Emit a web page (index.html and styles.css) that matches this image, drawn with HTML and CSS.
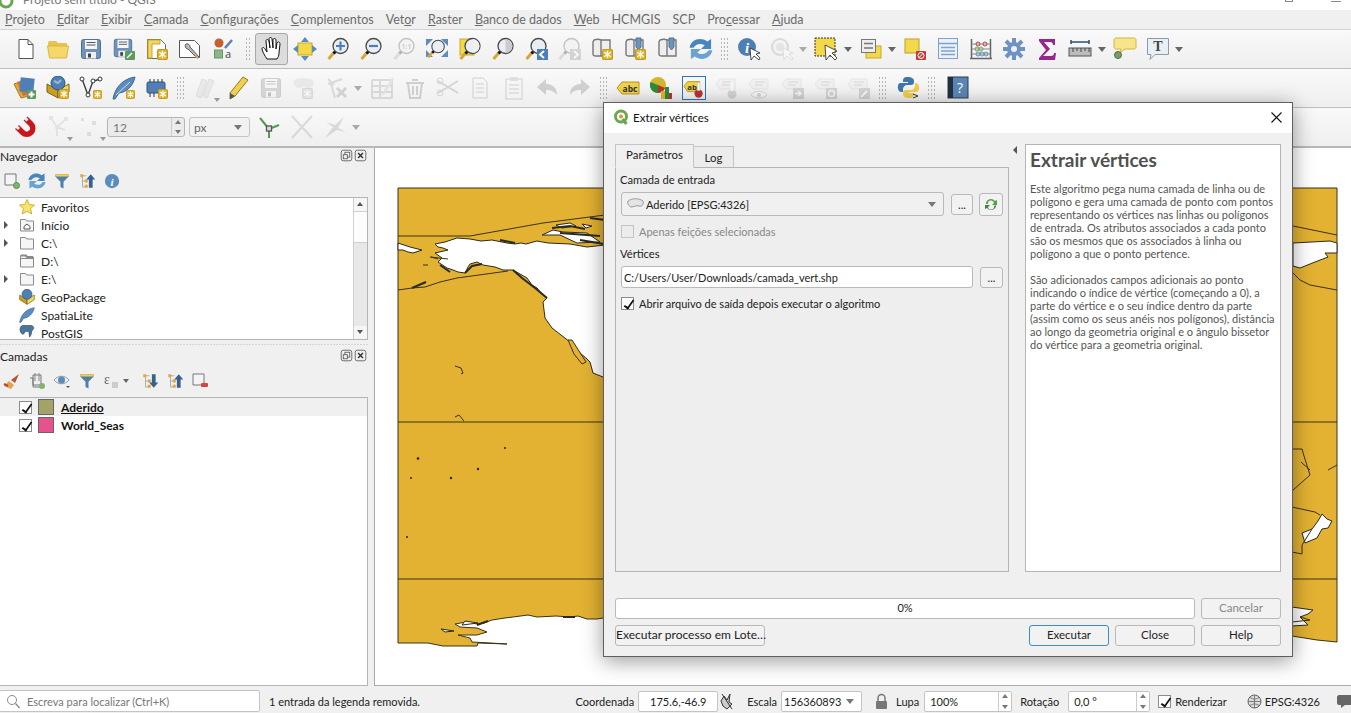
FILE: index.html
```html
<!DOCTYPE html>
<html lang="pt">
<head>
    <meta charset="UTF-8">
    <title>Projeto sem título - QGIS</title>
    <link rel="stylesheet" href="styles.css">
</head>
<body>
    <svg class="defs" width="0" height="0">
        <symbol id="badge" viewBox="0 0 10 10"><rect x=".5" y=".5" width="9" height="9" rx="1" fill="#e0b52c" stroke="#c39a1e"/><path d="M5 1.500v7M2 3l6 4M8 3l-6 4" stroke="#fff" stroke-width="1.200"/></symbol>
        <symbol id="floppy" viewBox="0 0 24 24"><rect x="2.500" y="2.500" width="19" height="19" rx="2" fill="#6f92bb" stroke="#4f729c"/><rect x="6" y="3" width="12" height="9" fill="#f4f6f8"/><path d="M7.500 5.500h9M7.500 8h9" stroke="#555"/><rect x="7" y="15" width="10" height="6.500" fill="#f0f0f0"/><rect x="9" y="16.500" width="3" height="4" fill="#444"/></symbol>
        <symbol id="mag" viewBox="0 0 24 24"><path d="M2.500 22l6-7" stroke="#d3a838" stroke-width="3"/><path d="M7.500 16.500l2-2" stroke="#111" stroke-width="3"/><circle cx="14.500" cy="9" r="7.500" fill="#e9eef4" stroke="#4a4a4a" stroke-width="1.300"/></symbol>
        <symbol id="sheet" viewBox="0 0 24 24"><path d="M4 3c3-1 5-1 7 0v16H6c-2 0-3 0-3-2V5zM11 3h9v16h-9" fill="#eee" stroke="#777" stroke-width="1.400"/></symbol>
        <symbol id="refresh" viewBox="2.500 2.500 19 19"><path d="M3 11c1-6 8-9 14-5l3-2v8h-8l3-3c-4-2-7-1-9 2z" fill="#4a86bd"/><path d="M21 13c-1 6-8 9-14 5l-3 2v-8h8l-3 3c4 2 7 1 9-2z" fill="#6aa3d2"/></symbol>
        <symbol id="funnel" viewBox="0 0 24 24"><path d="M3 3h18v3l-7 7v9l-4-2v-7L3 6z" fill="#4f7fab"/><path d="M3 3h18v3H3z" fill="#f0cf4a"/></symbol>
        <symbol id="treeup" viewBox="0 0 24 24"><path d="M4 5h7M6 5v15h5M6 12h5" fill="none" stroke="#999"/><rect x="3" y="3" width="4" height="4" fill="#e4a83a"/><rect x="9" y="10" width="4" height="4" fill="#e4a83a"/><rect x="9" y="17" width="4" height="4" fill="#e4a83a"/><path d="M17 3l6 7h-3.500v11h-5V10H11z" fill="#35608f"/></symbol>
        <symbol id="treedown" viewBox="0 0 24 24"><path d="M4 5h7M6 5v15h5M6 12h5" fill="none" stroke="#999"/><rect x="3" y="3" width="4" height="4" fill="#e4a83a"/><rect x="9" y="10" width="4" height="4" fill="#e4a83a"/><rect x="9" y="17" width="4" height="4" fill="#e4a83a"/><path d="M17 21l6-7h-3.500V3h-5v11H11z" fill="#35608f"/></symbol>
        <symbol id="folder" viewBox="0 0 16 16"><path d="M1.500 2.500h5l1 1.500h7v10h-13z" fill="#f6f6f6" stroke="#8a8a8a"/></symbol>
        <symbol id="tagoff" viewBox="0 0 24 24"><path d="M1 8l4-5h15v10H5z" fill="#e4e4e4" stroke="#bbb"/><path d="M7 6h10M7 9h8" stroke="#aaa" stroke-width="1.500"/></symbol>
        <symbol id="win" viewBox="0 0 16 16"><rect x="1.500" y="1.500" width="13" height="13" rx="2.500" fill="none" stroke="#555"/></symbol>
        <symbol id="float" viewBox="0 0 16 16"><use href="#win"/><rect x="6" y="4" width="6" height="6" fill="none" stroke="#555"/><rect x="4" y="7" width="5" height="5" fill="#eee" stroke="#555"/></symbol>
        <symbol id="closex" viewBox="0 0 16 16"><use href="#win"/><path d="M5 5l6 6M11 5l-6 6" stroke="#333" stroke-width="1.800"/></symbol>
    </svg>

    <div class="titlebar">
        <svg class="title-logo" viewBox="0 0 14 14" width="14" height="14"><circle cx="6" cy="2" r="6" fill="none" stroke="#6aa84f" stroke-width="3"/></svg>
        <span class="title-text">Projeto sem título - QGIS</span>
        <span class="title-max"></span>
        <span class="title-close"></span>
    </div>

    <div class="menubar">
        <span><u>P</u>rojeto</span>
        <span><u>E</u>ditar</span>
        <span><u>E</u>xibir</span>
        <span><u>C</u>amada</span>
        <span><u>C</u>onfigurações</span>
        <span><u>C</u>omplementos</span>
        <span>Vet<u>o</u>r</span>
        <span><u>R</u>aster</span>
        <span><u>B</u>anco de dados</span>
        <span><u>W</u>eb</span>
        <span>HCMGIS</span>
        <span>SCP</span>
        <span>Pro<u>c</u>essar</span>
        <span><u>A</u>juda</span>
    </div>

    <div class="toolbar">
        <span class="tb"><svg class="ic" viewBox="0 0 24 24"><path d="M6 2.500h9l5 5v14H6z" fill="#fff" stroke="#555"/><path d="M15 2.500v5h5" fill="none" stroke="#555"/></svg></span>
        <span class="tb"><svg class="ic" viewBox="0 0 24 24"><path d="M2 6l1-2h7l2 2h9v3H2z" fill="#e8c24a"/><path d="M1.500 9h21l-2 12h-17z" fill="#f5d869" stroke="#dcb53f"/></svg></span>
        <span class="tb"><svg class="ic"><use href="#floppy"/></svg></span>
        <span class="tb"><svg class="ic" viewBox="0 0 24 24"><use href="#floppy" width="22" height="22"/><rect x="13" y="14" width="10" height="9" rx="1" fill="#5e9a5e"/><path d="M15 21l5-5" stroke="#fff" stroke-width="1.500"/></svg></span>
        <span class="tb"><svg class="ic" viewBox="0 0 24 24"><path d="M2.500 2.500h13l5 5v14h-18z" fill="#fff" stroke="#666"/><path d="M3 3h12v4H7v14H3z" fill="#f2d65f" stroke="#c9a62f"/><use href="#badge" x="12" y="12" width="11" height="11"/></svg></span>
        <span class="tb"><svg class="ic" viewBox="0 0 24 24"><path d="M1.500 3.500h15l5 5v12h-20z" fill="#fff" stroke="#555"/><path d="M8 7a3 3 0 0 0 2 5l9 9 2-1-9-10a3 3 0 0 0-4-3" fill="#bbb" stroke="#555"/><path d="M17 19l3 2" stroke="#d3a838" stroke-width="2"/></svg></span>
        <span class="tb"><svg class="ic" viewBox="0 0 24 24"><circle cx="8" cy="6" r="4.500" fill="#c5602f"/><path d="M14 11l7-8" stroke="#5a84ad" stroke-width="2.500"/><rect x="3.500" y="13" width="8" height="8" fill="#8cb58c" stroke="#6a956a"/><text x="17" y="21" class="svga">a</text></svg></span>
        <span class="grip g1"></span>
        <span class="tb active"><svg class="ic" viewBox="0 0 24 24"><path d="M7 22c-2-3-5-8-5-10 0-2 2-2 3 0l2 3-1-11c0-2 2-2 3 0l1 7-1-9c0-2 3-2 3 0l1 9 0-8c0-2 3-2 3 0l0 9 1-6c1-2 3-1 3 1l-1 9c0 3-1 4-2 6z" fill="#fff" stroke="#111"/></svg></span>
        <span class="tb"><svg class="ic" viewBox="0 0 24 24"><rect x="5" y="6" width="14" height="12" fill="#f3d84a" stroke="#c7a92a"/><path d="M12 0l4 5H8zM12 24l4-5H8zM0 12l5-4v8zM24 12l-5-4v8z" fill="#5a8cc0"/></svg></span>
        <span class="tb"><svg class="ic"><use href="#mag"/><path d="M10 9h9M14.500 4.500v9" stroke="#4b7fb5" stroke-width="2.200"/></svg></span>
        <span class="tb"><svg class="ic"><use href="#mag"/><path d="M10 9h9" stroke="#4b7fb5" stroke-width="2.200"/></svg></span>
        <span class="tb off"><svg class="ic"><use href="#mag"/><text x="14.500" y="12" class="svg11">1:1</text></svg></span>
        <span class="tb"><svg class="ic" viewBox="0 0 24 24"><rect x="1" y="2" width="22" height="18" fill="#f3f3f3"/><path d="M1 2h7L1 9zM23 2h-7l7 7zM1 20h7l-7-7zM23 20h-7l7-7z" fill="#5a8cc0"/><use href="#mag" x="1" y="1" width="20" height="22"/></svg></span>
        <span class="tb"><svg class="ic" viewBox="0 0 24 24"><rect x="2" y="2" width="14" height="16" fill="#f3d84a" stroke="#c7a92a"/><use href="#mag"/><path d="M14.500 2a7 7 0 0 1 0 14z" fill="#f0f0f0"/></svg></span>
        <span class="tb"><svg class="ic" viewBox="0 0 24 24"><use href="#mag"/><path d="M14.500 2a7 7 0 0 1 0 14z" fill="#ccc"/></svg></span>
        <span class="tb"><svg class="ic" viewBox="0 0 24 24"><use href="#mag"/><rect x="13" y="12" width="11" height="11" fill="#4b7fb5"/><path d="M20 14l-4 3.500 4 3.500" fill="none" stroke="#fff" stroke-width="2"/></svg></span>
        <span class="tb off"><svg class="ic" viewBox="0 0 24 24"><use href="#mag"/><rect x="13" y="12" width="11" height="11" fill="#888"/><path d="M17 14l4 3.500-4 3.500" fill="none" stroke="#fff" stroke-width="2"/></svg></span>
        <span class="tb"><svg class="ic" viewBox="0 0 24 24"><use href="#sheet"/><use href="#badge" x="12" y="12" width="11" height="11"/></svg></span>
        <span class="tb"><svg class="ic" viewBox="0 0 24 24"><use href="#sheet"/><path d="M13 1h5v9l-2.500 3L13 10z" fill="#6f92bb" stroke="#4f729c"/><use href="#badge" x="12" y="12" width="11" height="11"/></svg></span>
        <span class="tb"><svg class="ic" viewBox="0 0 24 24"><use href="#sheet"/><path d="M13 1h5v9l-2.500 3L13 10z" fill="#6f92bb" stroke="#4f729c"/></svg></span>
        <span class="tb"><svg class="ic"><use href="#refresh"/></svg></span>
        <span class="grip g2"></span>
        <span class="tb"><svg class="ic" viewBox="0 0 24 24"><circle cx="10" cy="10" r="9" fill="#4d7fb5"/><text x="10" y="16" class="svgi">i</text><path d="M13 11l1 12 3-4 5 4 1-2-4-4 4-1z" fill="#fff" stroke="#222" stroke-width=".8"/></svg></span>
        <span class="tb off"><svg class="ic" viewBox="0 0 24 24"><circle cx="10" cy="10" r="8" fill="#eee" stroke="#999" stroke-width="2"/><circle cx="10" cy="10" r="4" fill="#bbb"/><path d="M13 11l1 12 3-4 5 4 1-2-4-4 4-1z" fill="#fff" stroke="#999" stroke-width=".8"/></svg></span>
        <span class="dd"></span>
        <span class="tb"><svg class="ic" viewBox="0 0 24 24"><rect x="1" y="1" width="20" height="18" fill="#f3d84a" stroke="#333" stroke-dasharray="2 1"/><path d="M11 8l1 15 4-5 5 5 2-2-5-5 5-2z" fill="#fff" stroke="#222" stroke-width=".8"/></svg></span>
        <span class="dd"></span>
        <span class="tb"><svg class="ic" viewBox="0 0 24 24"><rect x="7" y="9" width="15" height="12" fill="#f3d84a" stroke="#c7a92a"/><rect x="2.500" y="2.500" width="14" height="13" fill="#eee" stroke="#777"/><path d="M5 6.500h9M5 11h9" stroke="#777" stroke-width="1.500"/></svg></span>
        <span class="dd"></span>
        <span class="tb"><svg class="ic" viewBox="0 0 24 24"><rect x="2" y="2" width="14" height="14" fill="#f3d84a" stroke="#b9a02c"/><rect x="13" y="14" width="10" height="9" rx="1" fill="#c23b3b"/><circle cx="18" cy="18.500" r="3" fill="none" stroke="#fff"/><path d="M16 20.500l4-4" stroke="#fff"/></svg></span>
        <span class="tb"><svg class="ic" viewBox="0 0 24 24"><rect x="2.500" y="1.500" width="19" height="20" fill="#eaf1f8" stroke="#7fa3c7"/><path d="M3 6.500h18M5 10.500h14M5 14h14M5 17.500h14" stroke="#7fa3c7" stroke-width="1.300"/></svg></span>
        <span class="tb"><svg class="ic" viewBox="0 0 24 24"><path d="M2.500 2v19M21.500 2v19M1 21.500h22" stroke="#666" stroke-width="1.500"/><path d="M3 7h18M3 12h18M3 17h18" stroke="#888"/><circle cx="9" cy="7" r="2" fill="none" stroke="#c23b3b"/><circle cx="16" cy="7" r="2" fill="none" stroke="#c23b3b"/><circle cx="8" cy="12" r="2" fill="none" stroke="#6aa84f"/><circle cx="12" cy="12" r="2" fill="none" stroke="#6aa84f"/><circle cx="9" cy="17" r="2" fill="none" stroke="#5a8cc0"/><circle cx="13" cy="17" r="2" fill="none" stroke="#5a8cc0"/><circle cx="17" cy="17" r="2" fill="none" stroke="#5a8cc0"/></svg></span>
        <span class="tb"><svg class="ic" viewBox="0 0 24 24"><path d="M12 1v22M1 12h22M4 4l16 16M20 4L4 20" stroke="#6f92c4" stroke-width="4"/><circle cx="12" cy="12" r="7" fill="#6f92c4"/><circle cx="12" cy="12" r="3" fill="#f0f0f0"/></svg></span>
        <span class="tb"><svg class="ic" viewBox="0 0 24 24"><path d="M4 2h16v6h-2c0-2-1-3-3-3H9l6 7-7 7h8c2 0 3-1 3-3h2l-1 7H4v-2l7-8-7-9z" fill="#97268f"/></svg></span>
        <span class="tb"><svg class="ic" viewBox="0 0 24 24"><path d="M3 5h18M3 3v4M21 3v4" stroke="#2d4d73" stroke-width="1.500"/><rect x="1" y="11" width="22" height="8" fill="#bbb" stroke="#555"/><path d="M5 11v4M9 11v3M13 11v4M17 11v3M21 11v4" stroke="#444"/></svg></span>
        <span class="dd"></span>
        <span class="tb"><svg class="ic" viewBox="0 0 24 24"><path d="M3 1h18c1 0 2 1 2 2v7c0 1-1 2-2 2H12l-5 4 1-4H3c-1 0-2-1-2-2V3c0-1 1-2 2-2z" fill="#f8e48a" stroke="#d4b43c"/><circle cx="5" cy="18" r="3.500" fill="#7c9c6a" stroke="#556f47"/></svg></span>
        <span class="tb"><svg class="ic" viewBox="0 0 24 24"><path d="M1.500 1.500h21v16H9l-5 5 1-5H1.500z" fill="#e8f0f6" stroke="#8a9aa8"/><text x="12" y="14" class="svgt">T</text></svg></span>
        <span class="dd"></span>
    </div>

    <div class="toolbar">
        <span class="tb"><svg class="ic" viewBox="0 0 24 24"><path d="M1 8l9-3 6 15-8 2z" fill="#e4a83a" stroke="#a87a20"/><path d="M4 6l9-3 5 15-8 2z" fill="#d0703a"/><rect x="7" y="2" width="14" height="14" fill="#4f7fb5" transform="rotate(6 14 9)"/><rect x="14" y="14" width="9" height="9" rx="1" fill="#5e9a5e"/><path d="M18.500 15.500v6M15.500 18.500h6" stroke="#fff" stroke-width="2"/></svg></span>
        <span class="tb"><svg class="ic" viewBox="0 0 24 24"><path d="M1 8l11 6v8L1 16z" fill="#c89f25" stroke="#7a6212"/><path d="M12 14l11-6v8l-11 6z" fill="#f1d85a" stroke="#7a6212"/><circle cx="12" cy="7" r="7" fill="#4f7fb5" stroke="#2e537d"/><path d="M8 5l4 2 3-3" stroke="#9db9d6" fill="none" stroke-width="2"/><use href="#badge" x="13" y="13" width="10" height="10"/></svg></span>
        <span class="tb"><svg class="ic" viewBox="0 0 24 24"><path d="M3 3l6 16 5-14 8-2" fill="none" stroke="#333" stroke-width="1.300"/><circle cx="3" cy="3" r="2" fill="#fff" stroke="#333"/><circle cx="9" cy="19" r="2" fill="#fff" stroke="#333"/><circle cx="14" cy="5" r="2" fill="#fff" stroke="#333"/><circle cx="21" cy="3" r="2" fill="#fff" stroke="#333"/><use href="#badge" x="14" y="14" width="9" height="9"/></svg></span>
        <span class="tb"><svg class="ic" viewBox="0 0 24 24"><path d="M1 23C3 12 10 3 23 1c-2 9-8 15-16 16l-4 6z" fill="#5a8cc0" stroke="#3d6792"/><path d="M4 19L18 6" stroke="#cfe0ef"/><use href="#badge" x="14" y="14" width="9" height="9"/></svg></span>
        <span class="tb"><svg class="ic" viewBox="0 0 24 24"><rect x="2" y="6" width="18" height="11" rx="1.500" fill="#4f7fb5" stroke="#2e537d"/><path d="M5 3v3M9 3v3M13 3v3M17 3v3M5 17v4M9 17v4" stroke="#333"/><use href="#badge" x="13" y="13" width="10" height="10"/></svg></span>
        <span class="grip g3"></span>
        <span class="tb off"><svg class="ic" viewBox="0 0 24 24"><path d="M3 20L9 3l5 2-6 17zM10 20l6-17 5 2-7 17z" fill="#ccc" stroke="#aaa"/></svg><i class="mini"></i></span>
        <span class="tb"><svg class="ic" viewBox="0 0 24 24"><path d="M17 1l5 3L9 20l-5 3 0-6z" fill="#f0d24a" stroke="#8a7a2c"/><path d="M4 17l5 3-5 3z" fill="#555"/></svg></span>
        <span class="tb off"><svg class="ic"><use href="#floppy"/></svg></span>
        <span class="tb off"><svg class="ic" viewBox="0 0 24 24"><path d="M2 4c6-3 14-2 19 0 2 3 0 8-4 8-3 0-6-2-9 0-3 1-8-3-6-8z" fill="#ccc"/><use href="#badge" x="10" y="12" width="11" height="11"/></svg></span>
        <span class="tb off"><svg class="ic" viewBox="0 0 24 24"><path d="M3 3l6 6M3 8l14-5M6 8l4 14" stroke="#999" stroke-width="2" fill="none"/><path d="M12 12l9 9M21 12l-9 9" stroke="#888" stroke-width="3"/></svg></span>
        <span class="dd dd-tight"></span>
        <span class="tb spaced off"><svg class="ic" viewBox="0 0 24 24"><path d="M2 4h20M2 10h20M2 16h20M2 22h20M2 4v18M22 4v18M10 4v18" stroke="#999" stroke-width="2"/><path d="M22 1l-9 15-2 4 4-2 9-14z" fill="#bbb"/></svg></span>
        <span class="tb off"><svg class="ic" viewBox="0 0 24 24"><path d="M3 7h18M5 7l2 15h10l2-15M9 4h6M10 10v9M14 10v9" fill="none" stroke="#777" stroke-width="2"/></svg></span>
        <span class="tb off"><svg class="ic" viewBox="0 0 24 24"><path d="M2 5l20 12M2 17l20-12" stroke="#888" stroke-width="2"/><circle cx="4" cy="5" r="3" fill="none" stroke="#888"/><circle cx="4" cy="17" r="3" fill="none" stroke="#888"/></svg></span>
        <span class="tb off"><svg class="ic" viewBox="0 0 24 24"><path d="M4 2h10l4 4v16H4zM7 8h8M7 12h8M7 16h8" fill="#f5f5f5" stroke="#777"/></svg></span>
        <span class="tb off"><svg class="ic" viewBox="0 0 24 24"><rect x="4" y="3" width="16" height="20" fill="#f5f5f5" stroke="#777"/><rect x="8" y="1" width="8" height="4" fill="#aaa"/><path d="M7 9h10M7 13h10M7 17h10" stroke="#777"/></svg></span>
        <span class="tb off"><svg class="ic" viewBox="0 0 24 24"><path d="M2 11l9-8v5c7 0 11 4 11 11-3-4-6-5-11-5v5z" fill="#777"/></svg></span>
        <span class="tb off"><svg class="ic" viewBox="0 0 24 24"><path d="M22 11l-9-8v5C6 8 2 12 2 19c3-4 6-5 11-5v5z" fill="#777"/></svg></span>
        <span class="grip g4"></span>
        <span class="tb"><svg class="ic" viewBox="0 0 24 24"><path d="M1 12l5-6h17v12H6z" fill="#f0d24a" stroke="#b8961c"/><text x="14" y="16" class="svgabc">abc</text></svg></span>
        <span class="tb"><svg class="ic" viewBox="0 0 24 24"><circle cx="9" cy="9" r="8" fill="#d3b52f"/><path d="M9 9L1.500 6A8 8 0 0 0 9 17z" fill="#2c8c3c"/><path d="M9 9l7 3a8 8 0 0 1-7 5z" fill="#b7352f"/><rect x="12" y="15" width="4" height="8" fill="#e4b42c"/><rect x="16" y="11" width="4" height="12" fill="#2c8c3c"/><rect x="20" y="17" width="3" height="6" fill="#b7352f"/></svg></span>
        <span class="tb selected"><svg class="ic" viewBox="0 0 24 24"><path d="M1 10l4-5h13v11H5z" fill="#f0d24a" stroke="#b8961c"/><text x="10" y="14" class="svgabc">ab</text><circle cx="17" cy="18" r="4.500" fill="#b7352f"/><rect x="15.500" y="6" width="3" height="9" fill="#fff" stroke="#aaa" stroke-width=".5"/></svg></span>
        <span class="tb off"><svg class="ic" viewBox="0 0 24 24"><use href="#tagoff"/><circle cx="17" cy="18" r="4.500" fill="#888"/><rect x="15.500" y="6" width="3" height="9" fill="#fff"/></svg></span>
        <span class="tb off"><svg class="ic" viewBox="0 0 24 24"><use href="#tagoff"/><path d="M3 19c4-5 12-5 16 0-4 4-12 4-16 0z" fill="#fff" stroke="#888"/><circle cx="11" cy="19" r="2" fill="#888"/></svg></span>
        <span class="tb off"><svg class="ic" viewBox="0 0 24 24"><use href="#tagoff"/><rect x="12" y="12" width="11" height="11" fill="#888"/><path d="M14 17.500h5M17 15l3 2.500-3 2.500" fill="none" stroke="#fff" stroke-width="1.500"/></svg></span>
        <span class="tb off"><svg class="ic" viewBox="0 0 24 24"><use href="#tagoff"/><rect x="12" y="12" width="11" height="11" fill="#888"/><circle cx="17.500" cy="17.500" r="3" fill="none" stroke="#fff" stroke-width="1.500"/></svg></span>
        <span class="tb off"><svg class="ic" viewBox="0 0 24 24"><use href="#tagoff"/><rect x="12" y="12" width="11" height="11" fill="#888"/><path d="M14 21l6-6" stroke="#fff" stroke-width="2"/></svg></span>
        <span class="grip g5"></span>
        <span class="tb"><svg class="ic" viewBox="0 0 24 24"><path d="M12 1c-5 0-5 2-5 5h5v1H4c-3 0-3 9 1 9h2v-3c0-2 2-4 4-4h4c2 0 3-1 3-3V5c0-3-3-4-6-4z" fill="#3f78a8"/><path d="M13 22c5 0 5-2 5-5h-5v-1h8c3 0 3-9-1-9h-1v3c0 2-2 4-4 4h-5c-2 0-3 1-3 3v1c0 3 3 4 6 4z" fill="#f1cc4e"/><path d="M17 18l5 2-5 2" fill="none" stroke="#333"/></svg></span>
        <span class="grip g6"></span>
        <span class="tb"><svg class="ic" viewBox="0 0 24 24"><rect x="2" y="1" width="20" height="21" fill="#5b86b3" stroke="#2c3c50"/><rect x="2" y="1" width="5" height="21" fill="#23303f"/><text x="14" y="16.500" class="svgq">?</text></svg></span>
    </div>

    <div class="toolbar toolbar-last">
        <span class="tb"><svg class="ic" viewBox="0 0 24 24"><path d="M4 12L9.500 17.500A6 6 0 0 0 18 9L12.500 3.500" fill="none" stroke="#c8171c" stroke-width="5.500"/><path d="M2.500 10.500l3.500 3.500M11 2l3.500 3.500" stroke="#f2f2f2" stroke-width="3"/></svg></span>
        <span class="tb off"><svg class="ic" viewBox="0 0 24 24"><path d="M5 3l6 9 9-8M11 12v9M11 12l8 3" fill="none" stroke="#aaa" stroke-width="1.500"/><rect x="3" y="1" width="4" height="4" fill="#bbb"/><rect x="18" y="2" width="4" height="4" fill="#bbb"/><rect x="9" y="10" width="4" height="4" fill="#bbb"/></svg><i class="mini"></i></span>
        <span class="tb off"><svg class="ic" viewBox="0 0 24 24"><rect x="2" y="3" width="3" height="3" fill="#aaa"/><rect x="13" y="6" width="4" height="4" fill="#aaa"/><rect x="8" y="17" width="4" height="4" fill="#aaa"/></svg><i class="mini"></i></span>
        <div class="spin"><span>12</span><b class="spin-btns"></b></div>
        <div class="combo"><span>px</span><i class="combo-arrow"></i></div>
        <span class="tb"><svg class="ic" viewBox="0 0 24 24"><path d="M12 14L3 3M12 14l10-4" stroke="#4f9d4f" stroke-width="2"/><path d="M12 14v9" stroke="#4f9d4f" stroke-width="2"/><rect x="9.500" y="11" width="5" height="5" fill="#ddd" stroke="#555" stroke-width="1.300"/></svg></span>
        <span class="tb off"><svg class="ic" viewBox="0 0 24 24"><path d="M2 1l20 22M22 1L2 23" stroke="#999" stroke-width="2"/></svg></span>
        <span class="tb off"><svg class="ic" viewBox="0 0 24 24"><path d="M2 23l8-11-7-5 9 3 9-8-6 11 8 4-9-2z" fill="#999"/></svg></span>
        <span class="dd"></span>
    </div>

    <div class="main">
        <div class="left">
            <div class="dock-title">
                <span>Navegador</span>
                <span class="dock-btn"><svg><use href="#float"/></svg></span>
                <span class="dock-btn"><svg><use href="#closex"/></svg></span>
            </div>
            <div class="dock-tools">
                <span class="dk"><svg class="ic-s" viewBox="0 0 18 18"><path d="M2 2h11v11H2z" fill="#f4f4f4" stroke="#777"/><circle cx="13.500" cy="13.500" r="3" fill="#7fb56a" stroke="#5c8a4a"/></svg></span>
                <span class="dk"><svg class="ic-s"><use href="#refresh"/></svg></span>
                <span class="dk"><svg class="ic-s"><use href="#funnel"/></svg></span>
                <span class="dk"><svg class="ic-s"><use href="#treeup"/></svg></span>
                <span class="dk"><svg class="ic-s" viewBox="0 0 24 24"><circle cx="12" cy="12" r="9.500" fill="#5a8cc0"/><text x="12" y="18" class="svgi">i</text></svg></span>
            </div>
            <div class="tree tree-nav">
                <div class="tree-rows">
                    <div class="row"><i class="arrow none"></i><svg class="ic-r" viewBox="0 0 16 16"><path d="M8 .5l2.300 5 5.200.600-3.900 3.500 1.100 5.400L8 12.300 3.300 15l1.100-5.400L.5 6.100l5.200-.6z" fill="#f7e36a" stroke="#cdb23a"/></svg><span>Favoritos</span></div>
                    <div class="row"><i class="arrow"></i><svg class="ic-r" viewBox="0 0 16 16"><use href="#folder"/><path d="M5 9.500L8 7l3 2.500V12H5z" fill="#fff" stroke="#555"/></svg><span>Início</span></div>
                    <div class="row"><i class="arrow"></i><svg class="ic-r"><use href="#folder"/></svg><span>C:\</span></div>
                    <div class="row"><i class="arrow none"></i><svg class="ic-r" viewBox="0 0 16 16"><use href="#folder"/><path d="M2 5.500h12" stroke="#8a8a8a"/><path d="M2 2.500h5l1 1.500H14" stroke="#8a8a8a" stroke-width="2" fill="none"/></svg><span>D:\</span></div>
                    <div class="row"><i class="arrow"></i><svg class="ic-r"><use href="#folder"/></svg><span>E:\</span></div>
                    <div class="row"><i class="arrow none"></i><svg class="ic-r" viewBox="0 0 24 24"><path d="M1 9l11 7v7L1 16z" fill="#c89f25" stroke="#7a6212"/><path d="M12 16l11-7v7l-11 7z" fill="#f1d85a" stroke="#7a6212"/><circle cx="12" cy="8" r="7.500" fill="#4f7fb5" stroke="#2e537d"/></svg><span>GeoPackage</span></div>
                    <div class="row"><i class="arrow none"></i><svg class="ic-r" viewBox="0 0 24 24"><path d="M1 23C3 12 10 3 23 1c-2 9-8 15-16 16l-4 6z" fill="#5a8cc0" stroke="#3d6792"/></svg><span>SpatiaLite</span></div>
                    <div class="row"><i class="arrow none"></i><svg class="ic-r" viewBox="0 0 24 24"><path d="M3 2c-3 4-1 11 3 12 2-1 3-3 3-5 2 1 4 1 6 0 0 3 0 6 1 9 2-2 3-6 3-9 3-2 4-5 2-7-3-2-6-2-9-1-3-1-6-1-9 1z" fill="#4a7698" stroke="#2a4a66"/></svg><span>PostGIS</span></div>
                </div>
                <div class="scroll">
                    <i class="scroll-up"></i>
                    <i class="scroll-thumb"></i>
                    <i class="scroll-track"></i>
                    <i class="scroll-down"></i>
                </div>
            </div>
            <div class="split"></div>
            <div class="dock-title">
                <span>Camadas</span>
                <span class="dock-btn"><svg><use href="#float"/></svg></span>
                <span class="dock-btn"><svg><use href="#closex"/></svg></span>
            </div>
            <div class="dock-tools">
                <span class="dk"><svg class="ic-s" viewBox="0 0 18 18"><path d="M1 14l5-5 5 4-3 4z" fill="#e0a44a"/><path d="M8 8l8-6-4 9z" fill="#b8503a"/><path d="M1 12l4 2" stroke="#c23b3b" stroke-width="2"/></svg></span>
                <span class="dk"><svg class="ic-s" viewBox="0 0 18 18"><path d="M5 3h8v10H5zM2 6h3v9h8" fill="#eee" stroke="#777"/><path d="M7 1v8M11 1v8" stroke="#888"/><circle cx="14" cy="14" r="3" fill="#7fb56a"/></svg></span>
                <span class="dk"><svg class="ic-s" viewBox="0 0 18 18"><path d="M1 8c4-5 11-5 15 0-4 5-11 5-15 0z" fill="#eee" stroke="#999"/><circle cx="8.500" cy="8" r="3.500" fill="#5a8cc0"/><path d="M13 14l2 2 2-2z" fill="#555"/></svg></span>
                <span class="dk"><svg class="ic-s"><use href="#funnel"/></svg></span>
                <span class="dk dk-wide"><svg class="ic-s" viewBox="0 0 18 18"><text x="5" y="12" class="svge">ε</text><path d="M10 10h6v6h-6z" fill="#ccc"/></svg><i class="dd-small"></i></span>
                <span class="dk"><svg class="ic-s"><use href="#treedown"/></svg></span>
                <span class="dk"><svg class="ic-s"><use href="#treeup"/></svg></span>
                <span class="dk"><svg class="ic-s" viewBox="0 0 18 18"><path d="M2 2h11v11H2z" fill="#f4f4f4" stroke="#777"/><rect x="10" y="11" width="7" height="4" rx="1" fill="#d9433f"/></svg></span>
            </div>
            <div class="tree tree-layers">
                <div class="row layer current"><i class="check on"></i><i class="swatch olive"></i><b><u>Aderido</u></b></div>
                <div class="row layer"><i class="check on"></i><i class="swatch pink"></i><b>World_Seas</b></div>
            </div>
        </div>

        <div class="map">
            <svg class="map-svg" viewBox="375 148 976 538" width="976" height="538">
                <path class="land" d="M398 188H1337V642L1317 640 1292 636H900L603 618 597 619 587 619 578 616 570 617 556 616 537 617 528 615 513 617 505 618 492 620 484 623 477 624 466 622 455 624 460 627 477 628 487 632 477 635 458 635 470 638 472 642 490 643 507 644 478 643 477 646 443 646 428 643 398 643Z"/>
                <path class="hole" d="M435 244L445 242 457 238 470 239 481 241 492 240 507 243 515 244 521 243 526 244 537 241 548 243 570 244 587 247 605 245V378L603 377 593 373 590 362 586 358 580 353 570 342 561 335 552 328 545 318 543 302 547 298 541 293 537 288 532 285 527 278 513 270 503 270 495 267 483 265 477 262 470 264 468 267 465 273 458 272 453 270 447 268 438 262 442 258 435 253 448 250 443 248 438 247Z"/>
                <path class="hole" d="M398 250L403 250 408 252 413 253 422 250 410 247 398 243Z"/>
                <path class="hole" d="M542 235L553 230 563 232 587 233 600 242 577 243 560 235Z"/>
                <path class="hole" d="M556 225L570 223 576 226 562 228ZM582 224L592 226 586 228Z"/>
                <path class="land" d="M568 340L572 340 586 362 582 364 574 354Z"/>
                <path class="hole" d="M1293 243L1330 241 1337 243V253L1325 253 1328 257 1315 262 1300 268 1293 266Z"/>
                <path class="hole" d="M1292 607L1313 610 1308 614 1300 617 1308 625 1292 626Z"/>
                <path class="hole" d="M1302 533L1312 529 1318 521 1322 514 1327 519 1332 521 1328 528 1322 529 1317 538 1305 543Z"/>
                <path class="hole" d="M465 621L478 623 462 625ZM441 629L454 631 445 632Z"/>
                <g class="coast">
                    <path d="M398 236L470 236 543 223 605 215"/>
                    <path d="M398 290L412 288 425 287 440 282 457 278 508 271"/>
                    <path d="M398 422H1337"/>
                    <path d="M398 579H1337"/>
                    <path d="M455 417L459 415 464 421"/>
                    <path d="M455 366L461 368 463 373 461 374"/>
                    <path d="M423 265L428 265M430 257L448 259M431 257L438 259"/>
                    <path d="M1293 226L1337 235M1293 273L1300 280 1310 285 1337 290"/>
                    <path d="M1292 449H1302L1304 456 1310 475 1292 491M1301 462L1310 470"/>
                    <path d="M1292 507L1315 512 1320 515M1312 529L1302 545 1302 554 1292 552"/>
                    <path d="M1328 470L1337 465"/>
                    <path d="M1300 617L1310 620 1292 622"/>
                </g>
                <g class="coast-heavy">
                    <path d="M513 270L522 278 535 288 547 298"/>
                    <path d="M465 273L472 266 482 264M440 265L450 272M412 288L426 282"/>
                    <path d="M552 228L570 226 585 229M560 233L600 236M580 240L604 244M590 218L605 220"/>
                    <path d="M477 625L488 621M563 617H575M500 240L515 243"/>
                </g>
                <g class="dots">
                    <circle cx="418" cy="458.500" r="1.300"/>
                    <circle cx="478" cy="469" r="1.200"/>
                    <circle cx="451" cy="478" r="1.200"/>
                    <circle cx="411" cy="478" r="1"/>
                    <circle cx="505" cy="448" r="1"/>
                    <circle cx="407" cy="537" r="1"/>
                </g>
            </svg>
        </div>
    </div>

    <div class="statusbar">
        <div class="locator"><svg width="15" height="15" viewBox="0 0 15 15"><circle cx="6" cy="6" r="4.500" fill="none" stroke="#888"/><path d="M9.500 9.500l4 4.500" stroke="#888" stroke-width="1.300"/></svg><span>Escreva para localizar (Ctrl+K)</span></div>
        <span class="status-msg">1 entrada da legenda removida.</span>
        <div class="status-right">
            <span>Coordenada</span>
            <div class="sbox sbox-coord">175.6,-46.9</div>
            <svg class="toggle" width="16" height="18" viewBox="0 0 16 18"><path d="M3 1l10 15M2 8l3-5 3 4 3-6-1 8 3 2-5 5-4-3z" fill="#ccc" stroke="#333"/></svg>
            <span class="lbl-escala">Escala</span>
            <div class="sbox sbox-scale"><span>156360893</span><i class="combo-arrow"></i></div>
            <svg class="lock" width="13" height="17" viewBox="0 0 13 17"><path d="M3 8V5a3.500 3.500 0 0 1 7 0v3" fill="none" stroke="#777" stroke-width="1.500"/><rect x="1" y="8" width="11" height="8" rx="1" fill="#777"/></svg>
            <span>Lupa</span>
            <div class="sbox sbox-mag"><span>100%</span><b class="spin-btns"></b></div>
            <span>Rotação</span>
            <div class="sbox sbox-rot"><span>0,0 °</span><b class="spin-btns"></b></div>
            <label class="render"><i class="check on"></i>Renderizar</label>
            <svg class="globe" width="15" height="15" viewBox="0 0 15 15"><circle cx="7.500" cy="7.500" r="6.500" fill="#ddd" stroke="#666"/><path d="M1 7.500h13M7.500 1v13M3 3.500c3 2 6 2 9 0M3 11.500c3-2 6-2 9 0" fill="none" stroke="#666" stroke-width=".8"/></svg>
            <span>EPSG:4326</span>
            <svg class="bubble" width="16" height="15" viewBox="0 0 16 15"><path d="M2 1h12c1 0 2 1 2 2v6c0 1-1 2-2 2H8l-4 3v-3H2c-1 0-2-1-2-2V3c0-1 1-2 2-2z" fill="#666"/></svg>
        </div>
    </div>

    <div class="dialog">
        <div class="dlg-title">
            <svg width="16" height="16" viewBox="0 0 16 16"><circle cx="8" cy="7.500" r="5.500" fill="#fff" stroke="#6aa84f" stroke-width="3"/><circle cx="8" cy="7.500" r="2" fill="#e2902c"/><path d="M9.500 10l4 5" stroke="#6aa84f" stroke-width="3"/></svg>
            <span>Extrair vértices</span>
            <svg class="dlg-close" width="11" height="11" viewBox="0 0 11 11"><path d="M.5.500l10 10M10.500.500l-10 10" stroke="#111" stroke-width="1.100"/></svg>
        </div>
        <div class="dlg-body">
            <div class="dlg-top">
                <div class="dlg-left">
                    <div class="tabs">
                        <span class="tab tab-on">Parâmetros</span>
                        <span class="tab">Log</span>
                    </div>
                    <div class="pane">
                        <label class="field-label">Camada de entrada</label>
                        <div class="field-row row-combo">
                            <div class="field-combo"><svg width="17" height="12" viewBox="0 0 17 12"><path d="M1 3c4-3 11-3 15 0 1 3-1 6-4 5-3-1-5 1-8 1-2-1-4-3-3-6z" fill="#e4e4e4" stroke="#999"/></svg><span>Aderido [EPSG:4326]</span><i class="combo-arrow"></i></div>
                            <span class="btn-dots">...</span>
                            <span class="btn-icon"><svg width="16" height="16" viewBox="0 0 16 16"><path d="M3 8a5 5 0 0 1 9-3l2-1v5h-5l2-2a3 3 0 0 0-6 1z" fill="#5aa04a"/><path d="M13 9a5 5 0 0 1-9 3l-2 1V9h5l-2 2a3 3 0 0 0 6-1z" fill="#3e8a3a"/></svg></span>
                        </div>
                        <label class="field-check disabled"><i class="check"></i>Apenas feições selecionadas</label>
                        <label class="field-label label-out">Vértices</label>
                        <div class="field-row">
                            <div class="field-input">C:/Users/User/Downloads/camada_vert.shp</div>
                            <span class="btn-dots btn-dots-tall">...</span>
                        </div>
                        <label class="field-check check-out"><i class="check on"></i>Abrir arquivo de saída depois executar o algoritmo</label>
                    </div>
                </div>
                <div class="dlg-handle"><i></i></div>
                <div class="help-pane">
                    <h3>Extrair vértices</h3>
                    <p>Este algoritmo pega numa camada de linha ou de<br>polígono e gera uma camada de ponto com pontos<br>representando os vértices nas linhas ou polígonos<br>de entrada. Os atributos associados a cada ponto<br>são os mesmos que os associados à linha ou<br>polígono a que o ponto pertence.</p>
                    <p>São adicionados campos adicionais ao ponto<br>indicando o índice de vértice (começando a 0), a<br>parte do vértice e o seu índice dentro da parte<br>(assim como os seus anéis nos polígonos), distância<br>ao longo da geometria original e o ângulo bissetor<br>do vértice para a geometria original.</p>
                </div>
            </div>
            <div class="dlg-progress">
                <div class="progress">0%</div>
                <button class="btn" disabled>Cancelar</button>
            </div>
            <div class="dlg-actions">
                <button class="btn btn-batch">Executar processo em Lote…</button>
                <button class="btn btn-default">Executar</button>
                <button class="btn">Close</button>
                <button class="btn">Help</button>
            </div>
        </div>
    </div>
</body>
</html>
```

FILE: styles.css
```css
* {
    box-sizing: border-box;
}

html, body {
    margin: 0;
    height: 713px;
    overflow: hidden;
}

body {
    position: relative;
    display: flex;
    flex-direction: column;
    font-family: Lato, "Open Sans", sans-serif;
    font-size: 11px;
    color: #222;
    background-color: #f0f0f0;
}

.defs {
    display: none;
}

/* svg text */
.svgi { font: bold italic 15px "Liberation Serif", serif; fill: #fff; text-anchor: middle; }
.svga { font: 11px "Open Sans", sans-serif; fill: #444; text-anchor: middle; }
.svg11 { font: bold 7px "Open Sans", sans-serif; fill: #777; text-anchor: middle; }
.svgabc { font: bold 8.500px "Open Sans", sans-serif; fill: #333; text-anchor: middle; }
.svgt { font: bold 14px "Liberation Serif", serif; fill: #444; text-anchor: middle; }
.svgq { font: 14px "Open Sans", sans-serif; fill: #fff; text-anchor: middle; }
.svge { font: 14px "Liberation Serif", serif; fill: #666; text-anchor: middle; }

.titlebar {
    position: relative;
    height: 10px;
    background-color: #fff;
    overflow: hidden;
    flex: none;
}

.title-logo {
    position: absolute;
    left: 0;
    top: -1px;
}

.title-text {
    position: absolute;
    left: 23px;
    top: -9px;
    font-size: 12px;
    line-height: 18px;
    color: #777;
}

.title-max {
    position: absolute;
    left: 1285px;
    top: -6px;
    width: 8px;
    height: 8px;
    border: 1px solid #888;
}

.title-close {
    position: absolute;
    left: 1331px;
    top: -6px;
    width: 10px;
    height: 8px;
    border-bottom: 1px solid #888;
}

.menubar {
    display: flex;
    gap: 12px;
    height: 20px;
    padding: 0 0 0 5px;
    align-items: center;
    font-size: 12.500px;
    color: #6b6b6b;
    flex: none;
    border-bottom: 1px solid #d4d4d4;
}

.toolbar {
    display: flex;
    align-items: center;
    height: 39px;
    padding-left: 8px;
    flex: none;
    background: linear-gradient(#f9f9f9, #efefef);
    border-bottom: 1px solid #bdbdbd;
}

.toolbar-last {
    height: 38px;
    border-bottom: none;
}

.tb {
    position: relative;
    display: flex;
    align-items: center;
    justify-content: center;
    width: 33px;
    height: 32px;
    flex: none;
}

.tb.active {
    background-color: #dcdcdc;
    border: 1px solid #a8a8a8;
    border-radius: 3px;
}

.tb.selected .ic {
    border: 1px solid #2f74c0;
}

.tb.spaced {
    margin-left: 2px;
}

.off .ic {
    filter: grayscale(1) opacity(.3);
}

.ic {
    width: 24px;
    height: 24px;
}

.mini {
    position: absolute;
    right: 1px;
    bottom: 2px;
    border: 3px solid transparent;
    border-top: 4px solid #999;
    border-bottom: none;
}

.grip {
    width: 15px;
    height: 24px;
    flex: none;
    background-image: radial-gradient(#b5b5b5 .8px, transparent 1px);
    background-size: 3px 4px;
    background-clip: content-box;
    padding: 0 4px;
}

.g1 { width: 16px; padding: 0 5px; }
.g5 { width: 16px; }
.g6 { width: 17px; }

.dd {
    position: relative;
    width: 11.500px;
    height: 5px;
    flex: none;
}

.dd::after {
    content: "";
    position: absolute;
    left: 1px;
    top: 0;
    border: 4px solid transparent;
    border-top: 5px solid #666;
    border-bottom: none;
}

.dd-tight {
    width: 10px;
}

.off + .dd::after {
    border-top-color: #aaa;
}

.spin {
    display: flex;
    width: 78px;
    height: 20px;
    border: 1px solid #b5b5b5;
    border-radius: 3px;
    background-color: #ebebeb;
    color: #777;
    font-size: 12px;
    align-items: center;
    padding-left: 5px;
    justify-content: space-between;
}

.spin-btns {
    position: relative;
    display: block;
    width: 13px;
    height: 100%;
    border-left: 1px solid #ccc;
    flex: none;
}

.spin-btns::before,
.spin-btns::after {
    content: "";
    position: absolute;
    left: 2.500px;
    border: 3.500px solid transparent;
}

.spin-btns::before {
    top: 2px;
    border-top: none;
    border-bottom: 4px solid #777;
}

.spin-btns::after {
    bottom: 2px;
    border-bottom: none;
    border-top: 4px solid #777;
}

.combo {
    display: flex;
    width: 61px;
    height: 20px;
    margin: 0 2px 0 4px;
    padding: 0 7px 0 4px;
    border: 1px solid #c4c4c4;
    border-radius: 3px;
    background-color: #f2f2f2;
    color: #666;
    font-size: 12px;
    align-items: center;
    justify-content: space-between;
}

.combo-arrow {
    display: block;
    border: 4px solid transparent;
    border-top: 5px solid #777;
    border-bottom: none;
    flex: none;
}

.main {
    display: flex;
    flex: 1;
    min-height: 0;
    border-top: 2px solid #b8b8b8;
}

.left {
    display: flex;
    flex-direction: column;
    width: 368px;
    flex: none;
}

.dock-title {
    display: flex;
    align-items: center;
    height: 16px;
    flex: none;
    font-size: 12px;
}

.dock-title span:first-child {
    flex: 1;
}

.dock-btn {
    width: 14px;
    height: 14px;
}

.dock-btn svg {
    display: block;
    width: 13px;
    height: 13px;
}

.dock-tools {
    display: flex;
    align-items: center;
    height: 33px;
    flex: none;
}

.dk {
    display: flex;
    align-items: center;
    justify-content: center;
    width: 25px;
    height: 24px;
    flex: none;
}

.dk:first-child {
    margin-left: -1px;
}

.dk-wide {
    width: 38px;
    justify-content: flex-start;
    padding-left: 3px;
    gap: 3px;
}

.dd-small {
    border: 3.500px solid transparent;
    border-top: 4px solid #666;
    border-bottom: none;
}

.ic-s {
    width: 18px;
    height: 18px;
}

.tree {
    background-color: #fff;
    border: 1px solid #b5b5b5;
    margin-left: -1px;
}

.tree-nav {
    display: flex;
    height: 143px;
    flex: none;
    overflow: hidden;
}

.tree-rows {
    flex: 1;
    overflow: hidden;
}

.row {
    display: flex;
    align-items: center;
    height: 18px;
    font-size: 12px;
}

.arrow {
    width: 0;
    height: 0;
    margin: 0 11px 0 4px;
    border: 4px solid transparent;
    border-left: 4px solid #555;
    border-right: none;
    flex: none;
}

.arrow.none {
    visibility: hidden;
}

.ic-r {
    width: 16px;
    height: 16px;
    margin-right: 6px;
    flex: none;
}

.scroll {
    display: flex;
    flex-direction: column;
    width: 14px;
    flex: none;
    border-left: 1px solid #d0d0d0;
}

.scroll i {
    display: block;
}

.scroll-up,
.scroll-down {
    position: relative;
    height: 13px;
    background-color: #f6f6f6;
}

.scroll-up::after,
.scroll-down::after {
    content: "";
    position: absolute;
    left: 3px;
    top: 4px;
    border: 3.500px solid transparent;
}

.scroll-up::after {
    border-top: none;
    border-bottom: 4px solid #555;
}

.scroll-down::after {
    border-bottom: none;
    border-top: 4px solid #555;
}

.scroll-thumb {
    height: 32px;
    background-color: #fdfdfd;
    border-top: 1px solid #d0d0d0;
    border-bottom: 1px solid #d0d0d0;
}

.scroll-track {
    flex: 1;
    background-color: #e8e8e8;
}

.split {
    height: 8px;
    flex: none;
    background-image: radial-gradient(#bbb .7px, transparent 1px);
    background-size: 3px 3px;
    background-position: center;
    background-repeat: repeat-x;
}

.tree-layers {
    flex: 1;
    border-bottom: 1px solid #b5b5b5;
}

.layer {
    padding-left: 19px;
}

.layer b {
    color: #111;
}

.current {
    background-color: #f0f0f0;
}

.check {
    position: relative;
    display: block;
    width: 13px;
    height: 13px;
    background-color: #fff;
    border: 1px solid #8c8c8c;
    flex: none;
}

.check.on::after {
    content: "";
    position: absolute;
    left: 3.500px;
    top: 0;
    width: 4px;
    height: 9px;
    border-right: 2px solid #111;
    border-bottom: 2px solid #111;
    transform: rotate(35deg) scaleX(.85);
}

.swatch {
    display: block;
    width: 16px;
    height: 16px;
    margin: 0 7px 0 6px;
    border: 1px solid #666;
    flex: none;
}

.olive {
    background-color: #a3a267;
}

.pink {
    background-color: #e5528d;
}

.map {
    flex: 1;
    margin-left: 6px;
    min-width: 0;
    background-color: #fff;
    border-left: 1px solid #aaa;
    border-bottom: 1px solid #aaa;
    overflow: hidden;
}

.map-svg {
    display: block;
}

.land {
    fill: #e3b232;
    stroke: #3a3216;
    stroke-width: 1;
}

.hole {
    fill: #fff;
    stroke: #2c2a1a;
    stroke-width: 1;
}

.coast {
    fill: none;
    stroke: #3a3216;
    stroke-width: 1;
}

.coast-heavy {
    fill: none;
    stroke: #2a2a20;
    stroke-width: 2;
}

.dots circle {
    fill: #2c2410;
}

.statusbar {
    display: flex;
    align-items: center;
    height: 27px;
    flex: none;
}

.locator {
    display: flex;
    align-items: center;
    gap: 6px;
    width: 261px;
    height: 22px;
    margin-top: 3px;
    margin-left: -1px;
    padding-left: 6px;
    background-color: #fff;
    border: 1px solid #c4c4c4;
    border-radius: 2px;
    color: #777;
}

.status-msg {
    margin-left: 9px;
    margin-top: 3px;
}

.status-right {
    display: flex;
    align-items: center;
    margin-left: auto;
    margin-top: 4px;
}

.sbox {
    display: flex;
    align-items: center;
    height: 21px;
    margin-left: 4px;
    padding-left: 5px;
    background-color: #fff;
    border: 1px solid #c4c4c4;
    border-radius: 2px;
    justify-content: space-between;
}

.sbox-coord {
    width: 80px;
    justify-content: center;
    padding: 0;
}

.toggle {
    margin: 0 12px 0 1px;
}

.sbox-scale {
    width: 81px;
    padding: 0 7px 0 2px;
}

.lock {
    margin: 0 8px 0 13px;
}

.sbox-mag {
    width: 88px;
    margin-left: 5px;
    margin-right: 8px;
}

.sbox-rot {
    width: 82px;
    margin-left: 9px;
    margin-right: 8px;
}

.render {
    display: flex;
    align-items: center;
    gap: 4px;
    margin-right: 20px;
}

.globe {
    margin-right: 3px;
}

.bubble {
    margin: 0 -2px 0 17px;
}

.dialog {
    position: absolute;
    left: 603px;
    top: 102px;
    width: 690px;
    height: 555px;
    display: flex;
    flex-direction: column;
    background-color: #f0f0f0;
    border: 1px solid #5f5f5f;
    box-shadow: 0 4px 20px rgba(0, 0, 0, 0.4);
}

.dlg-title {
    display: flex;
    align-items: center;
    gap: 4px;
    height: 30px;
    padding: 0 10px 2px 9px;
    background-color: #fff;
    font-size: 11.600px;
    color: #111;
    flex: none;
}

.dlg-close {
    margin-left: auto;
}

.dlg-body {
    display: flex;
    flex-direction: column;
    flex: 1;
    min-height: 0;
    padding: 11px;
}

.dlg-top {
    display: flex;
    height: 428px;
    flex: none;
}

.dlg-left {
    display: flex;
    flex-direction: column;
    width: 394px;
    flex: none;
}

.tabs {
    display: flex;
    align-items: flex-end;
    height: 24px;
    flex: none;
    margin-bottom: -1px;
    font-size: 11.400px;
}

.tab {
    display: flex;
    align-items: center;
    justify-content: center;
    width: 40px;
    height: 22px;
    background-color: #ececec;
    border: 1px solid #c4c4c4;
    border-left: none;
}

.tab-on {
    position: relative;
    width: 79px;
    height: 24px;
    padding-bottom: 3px;
    background-color: #f0f0f0;
    border-left: 1px solid #c4c4c4;
    border-bottom: 1px solid #f0f0f0;
}

.pane {
    flex: 1;
    padding: 4px 5px 0;
    background-color: #eeeeee;
    border: 1px solid #b5b5b5;
}

.field-label {
    display: block;
    height: 15px;
    margin-left: -1px;
    line-height: 15px;
    font-size: 11.200px;
}

.label-out {
    margin-top: 8px;
}

.field-row {
    display: flex;
    align-items: center;
    margin-top: 5px;
}

.row-combo {
    height: 24px;
}

.field-combo {
    display: flex;
    align-items: center;
    width: 323px;
    height: 24px;
    padding: 0 7px 0 5px;
    gap: 2px;
    background-color: #f0f0f0;
    border: 1px solid #b9b9b9;
    border-radius: 3px;
}

.field-combo .combo-arrow {
    margin-left: auto;
}

.btn-dots {
    display: flex;
    align-items: center;
    justify-content: center;
    width: 22px;
    height: 21px;
    margin-left: 7px;
    background-color: #f2f2f2;
    border: 1px solid #b9b9b9;
    border-radius: 3px;
}

.btn-dots-tall {
    width: 23px;
}

.btn-icon {
    display: flex;
    align-items: center;
    justify-content: center;
    width: 24px;
    height: 23px;
    margin-left: 6px;
    background-color: #f2f2f2;
    border: 1px solid #b9b9b9;
    border-radius: 3px;
}

.field-check {
    display: flex;
    align-items: center;
    gap: 5px;
    height: 14px;
    margin-top: 8px;
}

.disabled {
    color: #888;
}

.disabled .check {
    background-color: #ececec;
    border-color: #c4c4c4;
}

.field-input {
    display: flex;
    align-items: center;
    width: 352px;
    height: 22px;
    padding-left: 2px;
    background-color: #fff;
    border: 1px solid #b9b9b9;
    border-radius: 3px;
}

.dlg-handle {
    position: relative;
    width: 16px;
    flex: none;
}

.dlg-handle i {
    position: absolute;
    left: 4px;
    top: 2px;
    border: 4px solid transparent;
    border-right: 4px solid #555;
    border-left: none;
}

.help-pane {
    flex: 1;
    min-width: 0;
    padding: 0 4px;
    background-color: #fff;
    border: 1px solid #b5b5b5;
    color: #555;
    white-space: nowrap;
}

.help-pane h3 {
    margin: 4px 0 11px;
    font-size: 19px;
    line-height: 22px;
    color: #505050;
}

.help-pane p {
    margin: 0 0 13px;
    line-height: 13px;
    font-size: 11px;
}

.dlg-progress {
    display: flex;
    justify-content: space-between;
    margin-top: 26px;
    height: 21px;
    flex: none;
}

.progress {
    display: flex;
    align-items: center;
    justify-content: center;
    width: 580px;
    padding-bottom: 2px;
    background-color: #fff;
    border: 1px solid #b9b9b9;
    border-radius: 3px;
}

.btn {
    width: 80px;
    height: 21px;
    padding: 0 0 2px;
    background-color: #f2f2f2;
    border: 1px solid #b9b9b9;
    border-radius: 3px;
    font: inherit;
    font-size: 11.500px;
    color: #222;
    white-space: nowrap;
}

.btn[disabled] {
    color: #888;
}

.dlg-actions {
    display: flex;
    gap: 6px;
    margin-top: 6px;
    flex: none;
}

.btn-batch {
    width: 150px;
    margin-right: auto;
    font-size: 12px;
}

.btn-default {
    border-color: #3f8ac9;
}
```
